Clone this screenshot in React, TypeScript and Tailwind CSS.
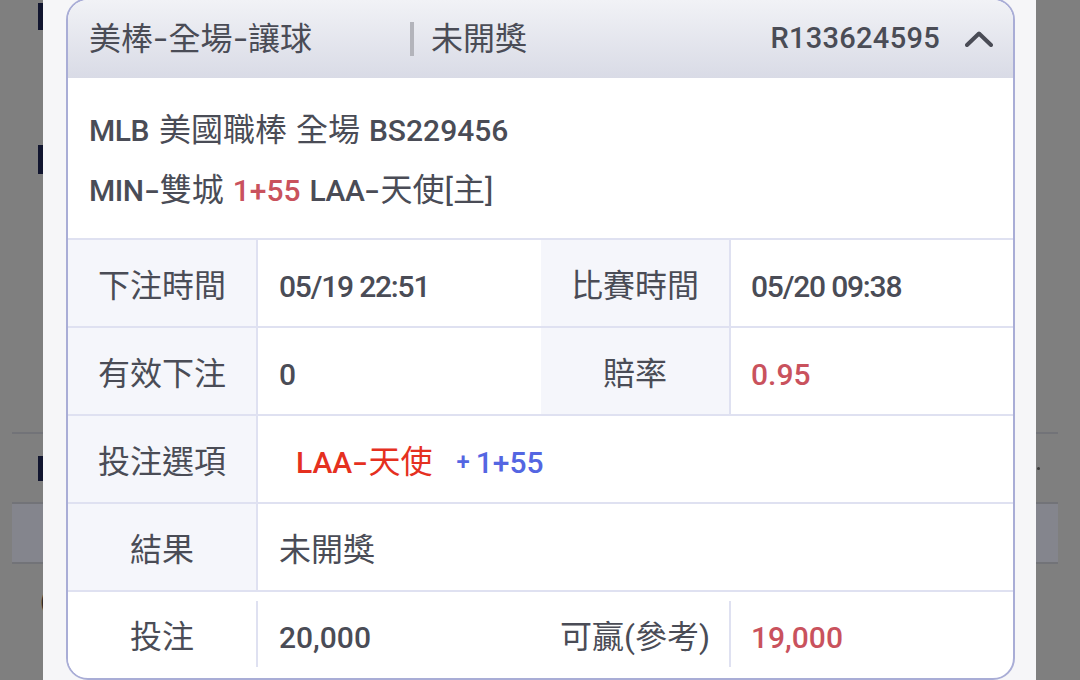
import * as React from 'react'

const line = 'bg-[#dfe1f1]'

function Zh({ children, className = '' }: { children: React.ReactNode; className?: string }) {
  return <span className={`text-[32px] font-normal tracking-normal ${className}`}>{children}</span>
}

function Dash() {
  return <span className="mx-[3px] inline-block scale-x-150 font-medium">-</span>
}

function Label({ children, white }: { children: React.ReactNode; white?: boolean }) {
  return (
    <div
      className={`flex w-[188px] shrink-0 items-center justify-center pt-[6px] ${white ? 'bg-white' : 'bg-[#f5f6fb]'}`}
    >
      <Zh>{children}</Zh>
    </div>
  )
}

function Row({ children }: { children: React.ReactNode }) {
  return <div className="flex h-[88px] border-t-2 border-[#dfe1f1]">{children}</div>
}

function Gutter({ right }: { right?: boolean }) {
  // the page behind the modal, dimmed by the overlay
  return (
    <div className={`flex shrink-0 flex-col bg-[#7f7f7f] ${right ? 'w-[44px]' : 'w-[43px]'}`}>
      {!right && (
        <>
          <div className="ml-[38px] mt-[3px] h-[27px] w-[5px] bg-[#11152f]" />
          <div className="ml-[38px] mt-[115px] h-[29px] w-[5px] bg-[#11152f]" />
        </>
      )}
      <div className={`${right ? 'mt-[432px] mr-[22px]' : 'mt-[258px] ml-[12px]'} h-[2px] bg-[#727378]`} />
      <div className={`flex h-[68px] items-center ${right ? 'mr-[22px]' : 'ml-[12px]'}`}>
        {right ? (
          <div className="ml-[1px] h-[3px] w-[3px] rounded-full bg-[#3a3a3a]" />
        ) : (
          <div className="ml-auto h-[25px] w-[5px] bg-[#11152f]" />
        )}
      </div>
      <div className={`${right ? 'mr-[22px]' : 'ml-[12px]'} h-[2px] bg-[#727378]`} />
      <div className={`${right ? 'mr-[22px]' : 'ml-[12px]'} h-[58px] bg-[#84858d]`} />
      <div className={`${right ? 'mr-[22px]' : 'ml-[12px]'} h-[2px] bg-[#727378]`} />
      {!right && (
        <div className="mt-[24px] flex justify-end font-['Roboto',sans-serif] text-[26px] leading-none text-[#2a2a2a]">
          <span className="-mr-[6px]">(</span>
        </div>
      )}
    </div>
  )
}

export default function App() {
  return (
    <div className="flex h-[680px] w-[1080px] overflow-hidden font-['Roboto','Noto_Sans_CJK_TC',sans-serif] text-[30px] text-[#4a4c56]">
      <Gutter />
      <div className="flex w-[993px] shrink-0 flex-col bg-[#f6f6f8] pl-[23px] pr-[21px]">
        <div className="-mt-[2px] flex h-[682px] flex-col overflow-hidden rounded-[22px] border-2 border-[#a9add6] bg-white">
          {/* header */}
          <div className="flex h-[78px] shrink-0 items-center bg-gradient-to-b from-[#f1f2f6] to-[#d9dbe6] pl-[21px] pr-[20px] text-[28px]">
            <div className="flex w-[321px] items-center">
              <Zh>美棒</Zh>
              <Dash />
              <Zh>全場</Zh>
              <Dash />
              <Zh>讓球</Zh>
            </div>
            <div className="h-[34px] w-[4px] bg-[#b3b4bb]" />
            <Zh className="ml-[17px]">未開獎</Zh>
            <span className="ml-auto text-[29px] font-medium tracking-[0.3px]">R133624595</span>
            <svg width="28" height="16" viewBox="0 0 28 16" className="ml-[25px]">
              <polyline
                points="2,14 14,2.5 26,14"
                fill="none"
                stroke="#4a4c56"
                strokeWidth="4"
                strokeLinecap="round"
                strokeLinejoin="round"
              />
            </svg>
          </div>

          {/* match info */}
          <div className="flex h-[160px] shrink-0 flex-col pl-[21px] pt-[22px]">
            <div className="flex h-[60px] items-center">
              <span className="font-medium tracking-[-0.5px]">MLB</span>
              <Zh className="ml-[10px]">美國職棒</Zh>
              <Zh className="ml-[9px]">全場</Zh>
              <span className="ml-[9px] font-medium">BS229456</span>
            </div>
            <div className="flex h-[60px] items-center">
              <span className="font-medium tracking-[-0.5px]">MIN</span>
              <Dash />
              <Zh>雙城</Zh>
              <span className="ml-[9px] font-medium text-[#c9525d]">1+55</span>
              <span className="ml-[9px] font-medium tracking-[-0.5px]">LAA</span>
              <Dash />
              <Zh>天使[主]</Zh>
            </div>
          </div>

          {/* details table */}
          <Row>
            <Label>下注時間</Label>
            <div className="flex w-[285px] items-center border-l-2 border-[#dfe1f1] pl-[21px] pt-[6px] font-medium tracking-[-1.2px]">
              05/19 22:51
            </div>
            <Label>比賽時間</Label>
            <div className="flex flex-1 items-center border-l-2 border-[#dfe1f1] pl-[20px] pt-[6px] font-medium tracking-[-1.2px]">
              05/20 09:38
            </div>
          </Row>
          <Row>
            <Label>有效下注</Label>
            <div className="flex w-[285px] items-center border-l-2 border-[#dfe1f1] pl-[21px] pt-[6px] font-medium">0</div>
            <Label>賠率</Label>
            <div className="flex flex-1 items-center border-l-2 border-[#dfe1f1] pl-[20px] pt-[6px] font-medium text-[#c9525d]">
              0.95
            </div>
          </Row>
          <Row>
            <Label>投注選項</Label>
            <div className="flex flex-1 items-center border-l-2 border-[#dfe1f1] pl-[38px] pt-[6px]">
              <span className="font-medium text-[#e5301f]">LAA</span>
              <span className="text-[#e5301f]">
                <Dash />
              </span>
              <Zh className="text-[#e5301f]">天使</Zh>
              <span className="ml-[24px] text-[24px] font-semibold text-[#5466e2]">+</span>
              <span className="ml-[6px] font-medium text-[#5466e2]">1+55</span>
            </div>
          </Row>
          <Row>
            <Label>結果</Label>
            <div className="flex flex-1 items-center border-l-2 border-[#dfe1f1] pl-[21px] pt-[6px]">
              <Zh>未開獎</Zh>
            </div>
          </Row>
          <div className="flex h-[86px] shrink-0 border-t-2 border-[#dfe1f1]">
            <Label white>投注</Label>
            <div className={`my-[9px] w-[2px] ${line}`} />
            <div className="flex w-[283px] items-center pl-[21px] pt-[6px] font-medium">20,000</div>
            <Label white>可贏(參考)</Label>
            <div className={`my-[9px] w-[2px] ${line}`} />
            <div className="flex flex-1 items-center pl-[20px] pt-[6px] font-medium text-[#c9525d]">19,000</div>
          </div>
        </div>
      </div>
      <Gutter right />
    </div>
  )
}
